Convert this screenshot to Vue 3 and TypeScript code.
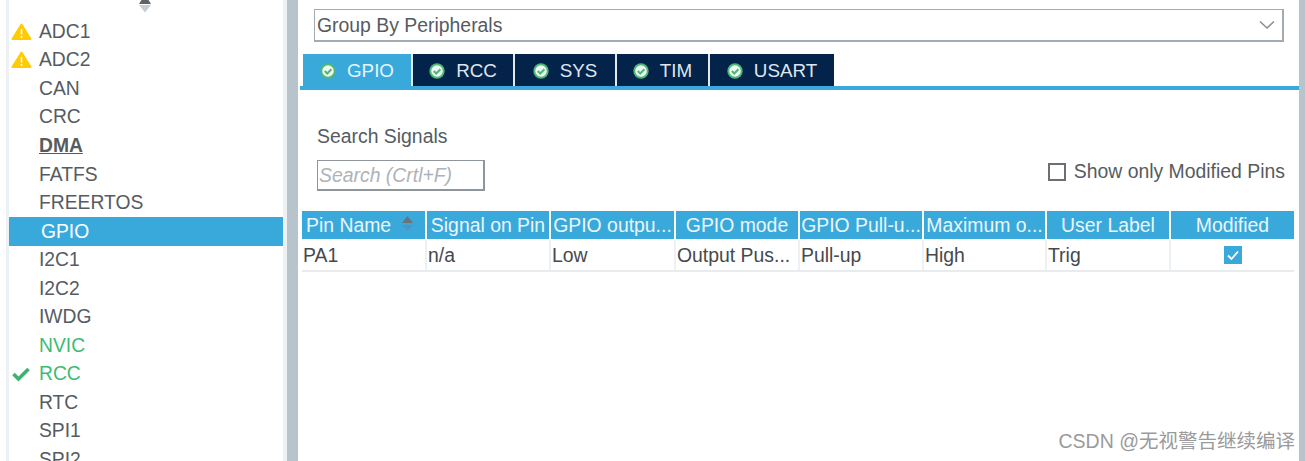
<script setup lang="ts">
interface Item { name: string; state?: 'warn' | 'ok' | 'green' | 'bold' | 'active' }
const items: Item[] = [
  { name: 'ADC1', state: 'warn' }, { name: 'ADC2', state: 'warn' }, { name: 'CAN' }, { name: 'CRC' },
  { name: 'DMA', state: 'bold' }, { name: 'FATFS' }, { name: 'FREERTOS' }, { name: 'GPIO', state: 'active' },
  { name: 'I2C1' }, { name: 'I2C2' }, { name: 'IWDG' }, { name: 'NVIC', state: 'green' },
  { name: 'RCC', state: 'ok' }, { name: 'RTC' }, { name: 'SPI1' }, { name: 'SPI2' },
]
const tabs = ['GPIO', 'RCC', 'SYS', 'TIM', 'USART']
const heads = [
  { t: 'Pin Name', c: 'left sort' }, { t: 'Signal on Pin', c: 'center' }, { t: 'GPIO outpu...', c: 'center' },
  { t: 'GPIO mode', c: 'center' }, { t: 'GPIO Pull-u...', c: 'center' }, { t: 'Maximum o...', c: 'center' },
  { t: 'User Label', c: 'center' }, { t: 'Modified', c: 'center' },
]
const cells = ['PA1', 'n/a', 'Low', 'Output Pus...', 'Pull-up', 'High', 'Trig']
</script>

<template>
  <div class="page">
    <aside class="side">
      <div class="list">
        <svg class="scroll" width="14" height="13" viewBox="0 0 14 13"><path d="M3.500 0h7L13 4H1z" fill="#5f6468"/><path d="M1 5h12L7 12.500z" fill="#c9cdd0"/></svg>
        <div v-for="it in items" :key="it.name" class="row" :class="it.state">
          <span class="ico">
            <svg v-if="it.state === 'warn'" width="21" height="18" viewBox="0 0 21 18"><path d="M10.500 1.500 19.500 16H1.500z" fill="#ffcc00" stroke="#ffcc00" stroke-width="2" stroke-linejoin="round"/><path d="M10.500 6v5.500M10.500 13v2" stroke="#fff" stroke-width="1.600"/></svg>
            <svg v-else-if="it.state === 'ok'" width="20" height="16" viewBox="0 0 20 16"><path d="M2.500 8 7.500 13 17.500 3" fill="none" stroke="#3cb371" stroke-width="3.600"/></svg>
          </span>
          <span class="label">{{ it.name }}</span>
        </div>
      </div>
      <div class="sash"></div>
    </aside>
    <main class="main">
      <div class="select">
        <span>Group By Peripherals</span>
        <svg width="18" height="10" viewBox="0 0 18 10"><path d="M2 1.500 9 8l7-6.500" fill="none" stroke="#8a9094" stroke-width="1.600"/></svg>
      </div>
      <div class="tabs">
        <div v-for="(t, i) in tabs" :key="t" class="tab" :class="{ on: i === 0 }">
          <svg width="16" height="16" viewBox="0 0 15 15"><circle cx="7.500" cy="7.500" r="7.200" fill="#4fb877"/><circle cx="7.500" cy="7.500" r="5.400" fill="#eef7f1"/><path d="M4.500 7.500 6.800 9.800 10.700 5.800" fill="none" stroke="#4fb877" stroke-width="2"/></svg>
          <span>{{ t }}</span>
        </div>
      </div>
      <div class="content">
        <div class="search">
          <div class="search-left">
            <div class="search-title">Search Signals</div>
            <div class="search-box">Search (Crtl+F)</div>
          </div>
          <label class="only"><span class="box"></span><span>Show only Modified Pins</span></label>
        </div>
        <div class="grid">
          <div v-for="h in heads" :key="h.t" class="th" :class="h.c">
            <span>{{ h.t }}</span>
            <svg v-if="h.c.includes('sort')" class="sort-ico" width="13" height="18" viewBox="0 0 13 18"><path d="M6.500 1 12 8H1z" fill="#66747e"/><path d="M1 10h11l-5.500 6z" fill="#5793b8"/></svg>
          </div>
          <div v-for="c in cells" :key="c" class="td">{{ c }}</div>
          <div class="td mid">
            <svg width="18" height="18" viewBox="0 0 18 18"><rect width="18" height="18" fill="#39a9dc"/><path d="M4 9.500 7.500 13 14 5.500" fill="none" stroke="#fff" stroke-width="1.800"/></svg>
          </div>
        </div>
      </div>
      <div class="mark">CSDN @无视警告继续编译</div>
    </main>
    <div class="right"></div>
  </div>
</template>

<style>
html, body { margin: 0; background: #fff; }
</style>

<style scoped>
.page {
  display: flex; width: 1305px; height: 461px; overflow: hidden; background: #fff;
  font-family: "Liberation Sans", "Noto Sans CJK SC", sans-serif; font-size: 19.400px; color: #565b61;
  position: relative;
}
.side { display: flex; width: 300px; height: 461px; flex: none; padding-left: 6px; box-sizing: border-box; }
.list {
  width: 274px; flex: none; box-sizing: content-box; border-left: 3px solid #eef1f3; border-right: 4px solid #eef1f3;
  padding-top: 17.500px; height: 443.500px; overflow: hidden; position: relative;
}
.scroll { position: absolute; left: 129px; top: 0; }
.row { display: flex; align-items: center; height: 28.55px; font-size: 19.300px; }
.ico { width: 30px; flex: none; display: flex; justify-content: center; box-sizing: border-box; margin-left: -3px; margin-right: 3px; }
.row.bold { font-weight: bold; text-decoration: underline; }
.row.green { color: #3dbb72; }
.row.ok { color: #3dbb72; }
.row.active { background: #39a9dc; color: #fff; }
.row.active .label { margin-left: 2px; }
.sash { width: 11px; flex: none; background: #b8c4cb; margin-right: 2px; }
.main { flex: none; width: 999px; height: 461px; position: relative; box-sizing: border-box; display: flex; flex-direction: column; }
.select {
  margin: 9px 15px 0 14px; height: 33px; box-sizing: border-box; border: 1px solid #a3abb0;
  border-width: 1px 2px 2px 1px; display: flex; align-items: center; justify-content: space-between; padding: 0 6px 0 2px;
}
.tabs { display: flex; margin-top: 12px; height: 32px; padding-left: 3px; border-bottom: 4px solid #39a9dc; }
.tab { display: flex; align-items: center; justify-content: center; gap: 11px; background: #04234a; color: #dfe7ee; height: 32px; box-sizing: border-box; padding-top: 1px; border-right: 2px solid #e3e8eb; font-size: 18.800px; }
.tab.on { background: #39a9dc; color: #e8f5fb; }
.tab:nth-child(1) { width: 110px; }
.tab:nth-child(2) { width: 102px; }
.tab:nth-child(3) { width: 102px; }
.tab:nth-child(4) { width: 93px; }
.tab:nth-child(5) { width: 124px; border-right: 0; }
.content { display: flex; flex-direction: column; padding-left: 2px; }
.search { display: flex; justify-content: space-between; align-items: flex-end; padding: 0 14px 0 15px; height: 101px; box-sizing: border-box; }
.search-title { line-height: 23px; }
.search-box { margin-top: 12px; width: 168px; height: 31px; box-sizing: border-box; border: 1px solid #8f969b; border-width: 1px 2px 2px 1px; color: #aeb3b7; font-style: italic; display: flex; align-items: center; padding-left: 1px; }
.only { display: flex; align-items: center; gap: 8px; margin-bottom: 8px; margin-right: 0; }
.box { width: 18px; height: 18px; box-sizing: border-box; border: 2px solid #6b7075; margin-left: -1px; }
.grid { margin-top: 20px; width: 992px; display: grid; grid-template-columns: 125px 124px 125px 124px 124px 123px 124px 123px; grid-template-rows: 29px 30px; border-bottom: 2px solid #e8ecef; }
.th { background: #39a9dc; color: #eaf6fc; margin-right: 2px; display: flex; align-items: center; white-space: nowrap; overflow: hidden; position: relative; height: 28px; }
.th:nth-child(8) { margin-right: 0; }
.th.center { justify-content: center; }
.th.left { padding-left: 4px; }
.sort-ico { position: absolute; right: 11px; top: 4px; }
.td { display: flex; align-items: center; padding-left: 1px; border-right: 2px solid #eef1f3; color: #45494e; white-space: nowrap; }
.td.mid { justify-content: center; padding: 0; border-right: 0; }
.mark { position: absolute; right: 4px; bottom: 7px; color: #9a9a9a; font-size: 19.500px; }
.right { flex: 1; background: #b8c4cb; }
</style>
